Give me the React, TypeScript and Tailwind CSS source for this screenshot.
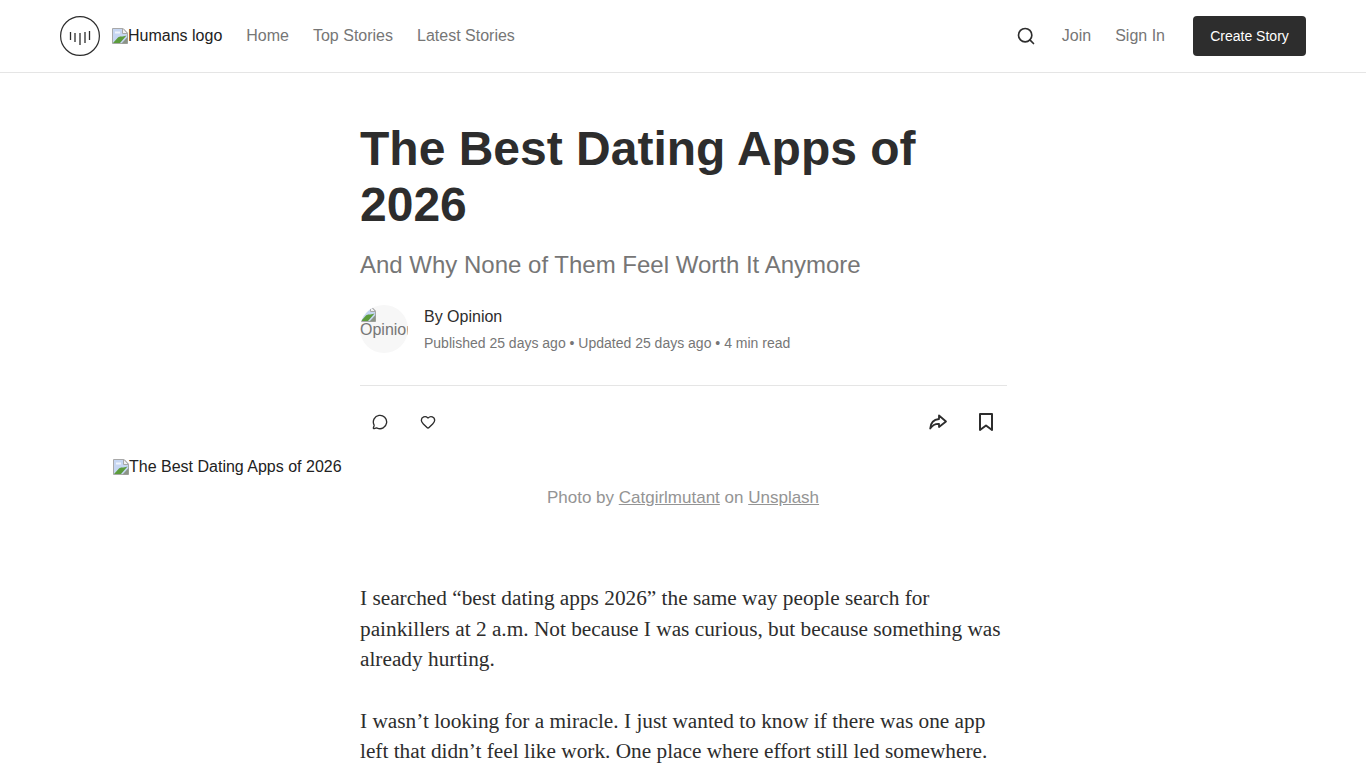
import React from 'react';
import { MessageCircle, Heart, Search } from 'lucide-react';

const BrokenImage = () => (
  <svg width="16" height="16" viewBox="0 0 16 16" className="shrink-0">
    <path d="M0.5 0.5H11L15.5 5V15.5H0.5Z" fill="#c6d6f2" stroke="#a8a8a8" />
    <path d="M3 3.5H8V5.5H3Z" fill="#eef3fb" />
    <path d="M1 15L6 9.5C8 8 10 9 14.5 7.5L8 15Z" fill="#5c9c3c" />
    <path d="M10.5 0.5V5.5H15.5L11 0.5Z" fill="#f2f2f2" stroke="#a8a8a8" />
    <path d="M9.5 15.5H15.5V9Z" fill="#8b9486" />
  </svg>
);

const Logo = () => (
  <svg width="40" height="40" viewBox="0 0 40 40" fill="none" stroke="#2d2d2d">
    <circle cx="20" cy="20" r="19.4" strokeWidth="1.2" />
    <path d="M10.5 16v8M15 17v9M20 17v12M25 16v11M29.5 15v9" strokeWidth="1.3" />
  </svg>
);

const ShareArrow = () => (
  <svg width="20" height="20" viewBox="0 0 20 20" fill="none" stroke="#2d2d2d" strokeWidth="1.8" strokeLinejoin="round" strokeLinecap="round">
    <path d="M11 3.5L18 9.5L11 15V11.8C7 11.6 4.5 13 2.2 16.5C2.6 11 5.5 7.6 11 7Z" />
  </svg>
);

const BookmarkIcon = () => (
  <svg width="20" height="20" viewBox="0 0 20 20" fill="none" stroke="#2d2d2d" strokeWidth="2" strokeLinejoin="round">
    <path d="M4 2H16V18L10 13.5L4 18Z" />
  </svg>
);

export default function App() {
  return (
    <div className="min-h-screen bg-white font-['Liberation_Sans',Arial,sans-serif] text-[#2d2d2d]">
      <header className="h-[73px] border-b border-[#e5e5e5] px-[60px] flex items-center justify-between">
        <div className="flex items-center">
          <Logo />
          <div className="ml-3 flex items-center text-base text-[#222] leading-[18px]">
            <BrokenImage />
            <span>Humans logo</span>
          </div>
          <nav className="ml-6 flex items-center gap-6 text-base text-[#767676]">
            <a>Home</a>
            <a>Top Stories</a>
            <a>Latest Stories</a>
          </nav>
        </div>
        <div className="flex items-center">
          <Search size={20} strokeWidth={2} className="text-[#2d2d2d]" />
          <a className="ml-[26px] text-base text-[#767676]">Join</a>
          <a className="ml-6 text-base text-[#767676]">Sign In</a>
          <button className="ml-7 h-10 w-[113px] rounded bg-[#2d2d2d] text-sm text-white">Create Story</button>
        </div>
      </header>

      <main>
        <div className="w-[647px] ml-[360px]">
          <h1 className="mt-[48px] text-[48px] leading-[56px] font-bold text-[#2d2d2d]">The Best Dating Apps of 2026</h1>
          <p className="mt-[16px] text-2xl leading-8 text-[#767676]">And Why None of Them Feel Worth It Anymore</p>
          <div className="mt-6 flex items-center">
            <div className="w-12 h-12 rounded-full bg-[#f7f7f7] overflow-hidden text-base leading-[18px] text-[#767676] pt-px">
              <BrokenImage />
              <div className="-mt-[1px] whitespace-nowrap">Opinion</div>
            </div>
            <div className="ml-4">
              <div className="-mt-[1px] text-base leading-6 text-[#2d2d2d]">By Opinion</div>
              <div className="mt-[4px] text-sm leading-5 text-[#767676]">Published 25 days ago • Updated 25 days ago • 4 min read</div>
            </div>
          </div>
          <div className="mt-8 border-t border-[#e5e5e5] h-[73px] flex items-center justify-between pl-1 pr-[5px]">
            <div className="flex items-center">
              <div className="w-8 h-8 flex items-center justify-center"><MessageCircle size={16} strokeWidth={2} /></div>
              <div className="ml-4 w-8 h-8 flex items-center justify-center"><Heart size={16} strokeWidth={2} /></div>
            </div>
            <div className="flex items-center">
              <div className="w-8 h-8 flex items-center justify-center"><ShareArrow /></div>
              <div className="ml-4 w-8 h-8 flex items-center justify-center"><BookmarkIcon /></div>
            </div>
          </div>
        </div>

        <div className="ml-[113px] flex items-center text-base leading-[18px] text-[#222]">
          <BrokenImage />
          <span>The Best Dating Apps of 2026</span>
        </div>
        <p className="mt-[10px] text-center text-[17px] leading-6 text-[#949494]">
          Photo by <span className="underline">Catgirlmutant</span> on <span className="underline">Unsplash</span>
        </p>

        <div className="w-[647px] ml-[360px] mt-[73px] font-['Liberation_Serif',Georgia,serif] text-[21.3px] leading-[30.6px] text-[#2d2d2d]">
          <p>I searched “best dating apps 2026” the same way people search for painkillers at 2 a.m. Not because I was curious, but because something was already hurting.</p>
          <p className="mt-[31px]">I wasn’t looking for a miracle. I just wanted to know if there was one app left that didn’t feel like work. One place where effort still led somewhere.</p>
        </div>
      </main>
    </div>
  );
}
